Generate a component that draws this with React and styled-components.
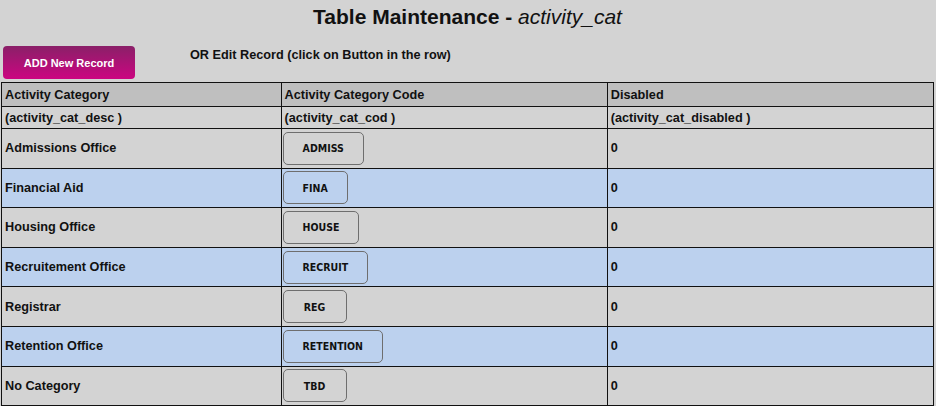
import styled, { createGlobalStyle } from "styled-components";

const Global = createGlobalStyle`
  html, body { margin: 0; padding: 0; background: #d3d3d3; }
  body { font-family: "Liberation Sans", Arial, sans-serif; color: #000; }
`;

const Page = styled.div`
  padding: 0 2px 0 1px;
  background: #d3d3d3;
  min-height: 406px;
`;

const Title = styled.h1`
  margin: 0;
  padding-top: 5px;
  height: 46px;
  box-sizing: border-box;
  text-align: center;
  font-size: 21px;
  font-weight: bold;
  color: #111;
  em { font-weight: normal; font-style: italic; }
`;

const Bar = styled.div`
  display: flex;
  align-items: flex-start;
  gap: 55px;
  padding-left: 2px;
  height: 36px;
`;

const AddButton = styled.button`
  width: 132px;
  height: 33px;
  border: none;
  border-radius: 4px;
  background: linear-gradient(#8a2068, #cc0581);
  color: #fff;
  font-family: "Liberation Sans", Arial, sans-serif;
  font-weight: bold;
  font-size: 11px;
  cursor: pointer;
`;

const Hint = styled.div`
  font-size: 12.7px;
  font-weight: bold;
  padding-top: 2px;
  color: #111;
`;

const Table = styled.table`
  width: 933px;
  border-collapse: collapse;
  border: 1px solid #111;
  table-layout: fixed;
`;

const Th = styled.th`
  text-align: left;
  font-size: 12.7px;
  font-weight: bold;
  height: ${(p) => (p.$sub ? "21px" : "23px")};
  padding: 0 3px;
  border: 1px solid #111;
  background: ${(p) => (p.$sub ? "#d3d3d3" : "#bfbfbf")};
  color: #111;
`;

const Row = styled.tr`
  background: ${(p) => (p.$alt ? "#bcd1ee" : "#d3d3d3")};
`;

const Td = styled.td`
  height: 38.6px;
  padding: 0 ${(p) => (p.$tight ? "1px" : "3px")};
  font-size: 12.7px;
  font-weight: bold;
  border: 1px solid #111;
  color: #111;
`;

const CodeButton = styled.button`
  min-width: 64px;
  height: 33px;
  padding: 0 19px;
  border: 1px solid #6e6e6e;
  border-radius: 5px;
  background: transparent;
  font-family: "DejaVu Sans Condensed", "Liberation Sans", sans-serif;
  font-weight: bold;
  font-size: 10.5px;
  color: #111;
  cursor: pointer;
`;

const rows = [
  ["Admissions Office", "ADMISS", "0"],
  ["Financial Aid", "FINA", "0"],
  ["Housing Office", "HOUSE", "0"],
  ["Recruitement Office", "RECRUIT", "0"],
  ["Registrar", "REG", "0"],
  ["Retention Office", "RETENTION", "0"],
  ["No Category", "TBD", "0"],
];

export default function App() {
  return (
    <Page>
      <Global />
      <Title>
        Table Maintenance - <em>activity_cat</em>
      </Title>
      <Bar>
        <AddButton>ADD New Record</AddButton>
        <Hint>OR Edit Record (click on Button in the row)</Hint>
      </Bar>
      <Table>
        <colgroup>
          <col style={{ width: "30%" }} />
          <col style={{ width: "35%" }} />
          <col style={{ width: "35%" }} />
        </colgroup>
        <thead>
          <tr>
            <Th>Activity Category</Th>
            <Th>Activity Category Code</Th>
            <Th>Disabled</Th>
          </tr>
          <tr>
            <Th $sub>(activity_cat_desc )</Th>
            <Th $sub>(activity_cat_cod )</Th>
            <Th $sub>(activity_cat_disabled )</Th>
          </tr>
        </thead>
        <tbody>
          {rows.map((r, i) => (
            <Row key={r[1]} $alt={i % 2 === 1}>
              <Td>{r[0]}</Td>
              <Td $tight>
                <CodeButton>{r[1]}</CodeButton>
              </Td>
              <Td>{r[2]}</Td>
            </Row>
          ))}
        </tbody>
      </Table>
    </Page>
  );
}
